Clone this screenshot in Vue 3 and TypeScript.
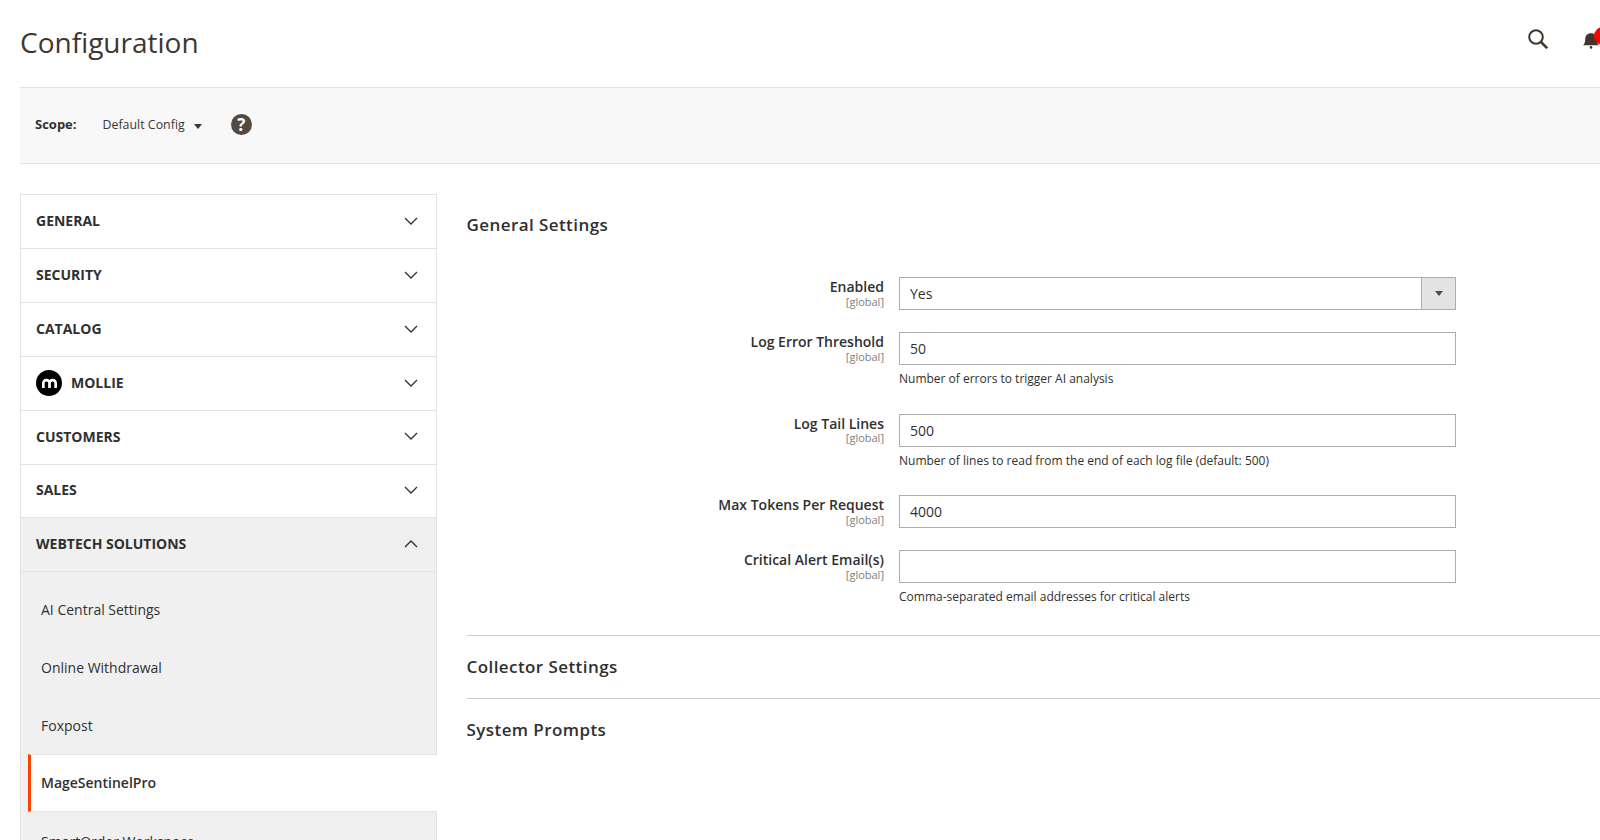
<script setup lang="ts">
import { ref } from "vue";

interface Field {
  label: string
  value: string
  note?: string
  isSelect?: boolean
}

const groups = ref<string[]>(['General', 'Security', 'Catalog', 'Mollie', 'Customers', 'Sales'])
const subItems = ref<string[]>(['AI Central Settings', 'Online Withdrawal', 'Foxpost'])
const fields = ref<Field[]>([
  { label: 'Enabled', value: 'Yes', isSelect: true },
  { label: 'Log Error Threshold', value: '50', note: 'Number of errors to trigger AI analysis' },
  { label: 'Log Tail Lines', value: '500', note: 'Number of lines to read from the end of each log file (default: 500)' },
  { label: 'Max Tokens Per Request', value: '4000' },
  { label: 'Critical Alert Email(s)', value: '', note: 'Comma-separated email addresses for critical alerts' },
])
</script>

<template>
  <div class="page">
    <div class="inner">
      <header class="top">
        <h1 class="title">Configuration</h1>
        <div class="actions">
          <svg class="search" width="20" height="20" viewBox="0 0 20 20" fill="none" stroke="#41362f">
            <circle cx="8" cy="8" r="6.800" stroke-width="2" />
            <path d="M12.800 12.800L19.200 19.200" stroke-width="2.600" />
          </svg>
          <div class="bell">
            <svg width="16" height="18" viewBox="0 0 18 20" fill="#41362f">
              <path d="M0 16c2-2 2.500-3.500 2.500-7C2.500 5 5 2.500 9 2.500S15.500 5 15.500 9c0 3.500.5 5 2.500 7z" />
              <circle cx="9" cy="18.300" r="1.500" />
            </svg>
            <span class="badge"></span>
          </div>
        </div>
      </header>

      <div class="scope">
        <span class="scope-label">Scope:</span>
        <span class="scope-value">Default Config</span>
        <span class="scope-caret"></span>
        <span class="help">?</span>
      </div>

      <div class="columns">
        <nav class="side">
          <div v-for="g in groups" :key="g" class="group">
            <span v-if="g === 'Mollie'" class="mollie">
              <svg width="15" height="10" viewBox="0 0 18 12" fill="none" stroke="#fff" stroke-width="3.200">
                <path d="M1.600 12V6a3.500 3.500 0 0 1 3.500-3.500h.4A3.500 3.500 0 0 1 9 6v6M9 6a3.500 3.500 0 0 1 3.500-3.500h.4A3.500 3.500 0 0 1 16.400 6v6" />
              </svg>
            </span>
            <span class="group-name">{{ g }}</span>
            <svg class="chev" width="14" height="8" viewBox="0 0 14 8" fill="none" stroke="#303030" stroke-width="1.300">
              <path d="M1 1l6 6 6-6" />
            </svg>
          </div>
          <div class="group open">
            <span class="group-name">Webtech Solutions</span>
            <svg class="chev" width="14" height="8" viewBox="0 0 14 8" fill="none" stroke="#303030" stroke-width="1.300">
              <path d="M1 7l6-6 6 6" />
            </svg>
          </div>
          <ul class="subs">
            <li v-for="s in subItems" :key="s" class="sub">{{ s }}</li>
            <li class="sub active">MageSentinelPro</li>
            <li class="sub">SmartOrder Workspace</li>
          </ul>
        </nav>

        <main class="main">
          <h2 class="section first">General Settings</h2>
          <div class="form">
            <div v-for="f in fields" :key="f.label" class="row">
              <div class="label">
                <div class="label-text">{{ f.label }}</div>
                <div class="label-scope">[global]</div>
              </div>
              <div class="control">
                <div v-if="f.isSelect" class="select-wrap">
                  <select class="input select">
                    <option>{{ f.value }}</option>
                  </select>
                  <span class="select-btn"><i class="select-arrow"></i></span>
                </div>
                <input v-else class="input" type="text" :value="f.value" />
                <p v-if="f.note" class="note">{{ f.note }}</p>
              </div>
            </div>
          </div>
          <h2 class="section">Collector Settings</h2>
          <h2 class="section">System Prompts</h2>
        </main>
      </div>
    </div>
  </div>
</template>

<style>
html, body {
  margin: 0;
  overflow: hidden;
  background: #fff;
}
</style>

<style scoped>
.page {
  width: 1600px;
  height: 840px;
  overflow: hidden;
  font-family: "Open Sans", sans-serif;
  color: #303030;
}
.inner {
  width: 1660px;
  padding-left: 20px;
  box-sizing: border-box;
}
.top {
  height: 87px;
  display: flex;
  justify-content: space-between;
}
.title {
  margin: 0;
  padding-top: 23px;
  font-size: 28px;
  line-height: 38px;
  font-weight: 400;
  color: #41362f;
}
.actions {
  display: flex;
  gap: 35px;
  padding-top: 29px;
  width: 132px;
  box-sizing: border-box;
}
.search {
  display: block;
}
.bell {
  position: relative;
  padding-top: 2px;
}
.bell svg {
  display: block;
}
.badge {
  position: absolute;
  left: 11px;
  top: -2px;
  width: 18px;
  height: 18px;
  border-radius: 50%;
  background: #f00;
}
.scope {
  height: 77px;
  box-sizing: border-box;
  display: flex;
  align-items: center;
  padding: 0 0 4px 15px;
  background: #f8f8f8;
  border-top: 1px solid #e3e3e3;
  border-bottom: 1px solid #e3e3e3;
  font-size: 13px;
}
.scope-label {
  font-weight: 700;
  width: 67.500px;
}
.scope-value {
  margin-top: 1px;
  font-size: 12.400px;
  color: #41362f;
}
.scope-caret {
  margin: 5px 0 0 9px;
  border: 4px solid transparent;
  border-top: 5px solid #41362f;
  border-bottom: 0;
}
.help {
  margin: 2px 0 0 29px;
  width: 21px;
  height: 21px;
  border-radius: 50%;
  background: #514943;
  color: #fff;
  font-size: 17px;
  font-weight: 700;
  line-height: 21px;
  text-align: center;
}
.columns {
  display: grid;
  grid-template-columns: 417px 1fr;
  column-gap: 29.500px;
  padding-top: 30px;
}
.side {
  border: 1px solid #e3e3e3;
  border-bottom: 0;
}
.group {
  height: 54px;
  box-sizing: border-box;
  display: flex;
  align-items: center;
  padding: 0 18px 2px 15px;
  border-bottom: 1px solid #e3e3e3;
  font-size: 14px;
  font-weight: 700;
  text-transform: uppercase;
}
.group:nth-child(5),
.group:nth-child(6) {
  height: 53.500px;
}
.group.open {
  background: #f0f0f0;
}
.group-name {
  flex: 1;
}
.mollie {
  width: 26px;
  height: 26px;
  margin-right: 9px;
  border-radius: 50%;
  background: #000;
  display: flex;
  align-items: center;
  justify-content: center;
}
.subs {
  margin: 0;
  padding: 8.600px 0 0;
  background: #f0f0f0;
  list-style: none;
}
.sub {
  height: 57.800px;
  display: flex;
  align-items: center;
  padding-left: 20px;
  background: #f0f0f0;
  font-size: 14px;
}
.sub.active {
  height: 58.500px;
  margin: 0 -1px 0 7px;
  padding: 0 0 1.500px 10px;
  box-sizing: border-box;
  background: #fff;
  border-left: 3px solid #fb4300;
  border-top: 1px solid #e3e3e3;
  border-bottom: 1px solid #e3e3e3;
  font-weight: 600;
}
.main {
  min-width: 0;
}
.section {
  margin: 0;
  height: 63px;
  box-sizing: border-box;
  padding-top: 19.500px;
  border-top: 1px solid #ccc;
  font-size: 17px;
  line-height: 24px;
  font-weight: 600;
  letter-spacing: 0.025em;
  color: #303030;
}
.section.first {
  height: 83px;
  padding-top: 19px;
  border-top: 0;
}
.form {
  width: 989px;
  padding-bottom: 3px;
}
.row {
  display: grid;
  grid-template-columns: 417.500px 557px;
  column-gap: 15px;
  padding-bottom: 22px;
}
.label {
  text-align: right;
}
.label-text {
  font-size: 14px;
  line-height: 19px;
  font-weight: 600;
}
.label-scope {
  font-size: 11px;
  line-height: 11px;
  margin-top: -0.500px;
  color: #808080;
}
.input {
  display: block;
  width: 100%;
  height: 33px;
  box-sizing: border-box;
  padding: 0 10px;
  border: 1px solid #adadad;
  border-radius: 0;
  background: #fff;
  font-family: inherit;
  font-size: 14px;
  color: #303030;
  outline: 0;
}
.select-wrap {
  position: relative;
}
.select {
  appearance: none;
  -webkit-appearance: none;
}
.select-btn {
  position: absolute;
  right: 0;
  top: 0;
  width: 35px;
  height: 33px;
  box-sizing: border-box;
  border: 1px solid #adadad;
  background: #e3e3e3;
  display: flex;
  align-items: center;
  justify-content: center;
  pointer-events: none;
}
.select-arrow {
  border: 4px solid transparent;
  border-top: 5px solid #514943;
  border-bottom: 0;
}
.note {
  margin: 5px 0 0;
  height: 21.500px;
  font-size: 12px;
  line-height: 17px;
}
</style>
